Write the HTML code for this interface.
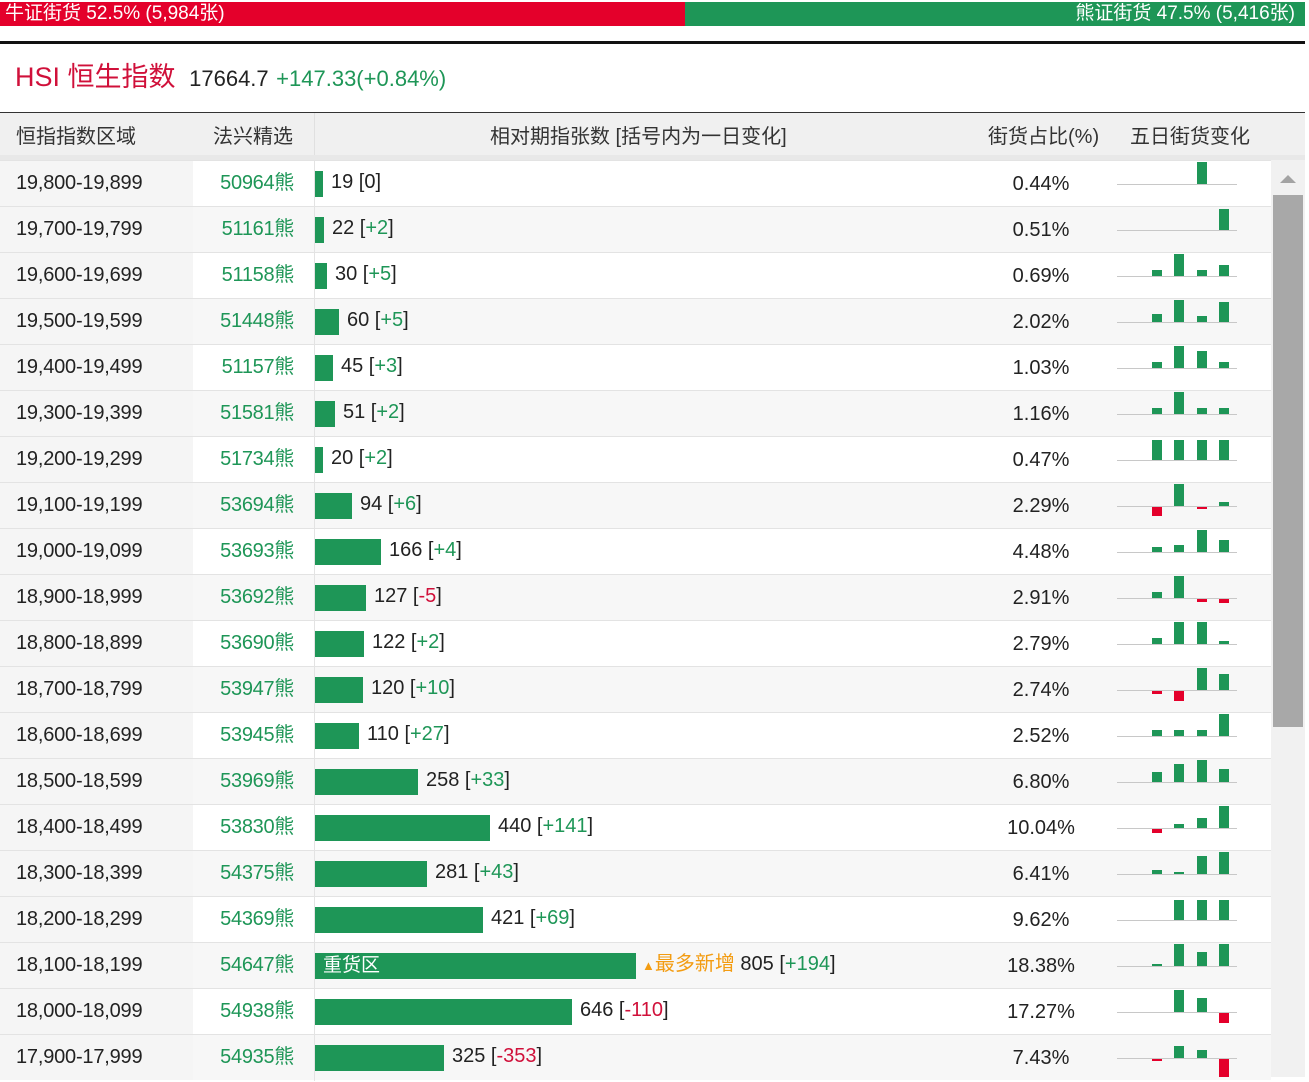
<!DOCTYPE html>
<html><head><meta charset="utf-8"><style>
*{margin:0;padding:0;box-sizing:border-box}
body{width:1309px;height:1077px;overflow:hidden;background:#fff;font-family:"Liberation Sans","Noto Sans CJK SC",sans-serif;color:#222;position:relative}
.a{position:absolute}
.r{position:absolute;left:0;width:1271px;height:46px;border-top:1px solid #e3e3e3;font-size:20px}
.r.o{background:#fff}.r.e{background:#f7f7f7}
.c1{position:absolute;left:0;top:0;width:193px;height:45px;background:#f5f5f5;padding-left:16px;line-height:45px;letter-spacing:-0.2px}
.c2{position:absolute;left:193px;top:0;width:101px;text-align:right;line-height:45px;color:#1e9657;letter-spacing:-0.3px}
.bl{position:absolute;left:314px;top:0;width:1px;height:46px;background:#e3e3e3}
.bar{position:absolute;left:315px;top:10px;height:26px;background:#1e9657}
.t{position:absolute;top:0;line-height:43px;white-space:nowrap}
.g{color:#1e9657}.d{color:#d0103a}
.p{position:absolute;left:966px;width:150px;top:0;line-height:47px;text-align:center}
.ln{position:absolute;left:1117px;top:23px;width:120px;height:1px;background:#c8c8c8}
.u,.n{position:absolute;width:10px}
.u{background:#1e9657}.n{background:#e4002b}
</style></head><body>
<div class="a" style="left:0;top:2px;width:685px;height:24px;background:#e4002b;color:#fff;font-size:19px;line-height:24px;padding-left:5px">牛证街货 52.5% (5,984张)</div>
<div class="a" style="left:685px;top:2px;width:620px;height:24px;background:#1e9657;color:#fff;font-size:19px;line-height:24px;text-align:right;padding-right:10px">熊证街货 47.5% (5,416张)</div>
<div class="a" style="left:0;top:41px;width:1305px;height:3px;background:#111"></div>
<div class="a" style="left:15px;top:59px;font-size:27px;color:#d0103a;line-height:36px">HSI 恒生指数 <span style="font-size:22px;color:#222">&nbsp;17664.7</span> <span style="font-size:22px" class="g">+147.33(+0.84%)</span></div>
<div class="a" style="left:0;top:112px;width:1305px;height:1px;background:#333"></div>
<div class="a" style="left:0;top:113px;width:1305px;height:47px;background:#f0f0f0;border-bottom:5px solid #e8e8e8;font-size:20px;color:#333">
<span class="a" style="left:16px;top:7px">恒指指数区域</span>
<span class="a" style="left:213px;top:7px">法兴精选</span>
<span class="a" style="left:314px;top:0;width:1px;height:42px;background:#e0e0e0"></span>
<span class="a" style="left:490px;top:7px">相对期指张数 [括号内为一日变化]</span>
<span class="a" style="left:988px;top:7px">街货占比(%)</span>
<span class="a" style="left:1130px;top:7px">五日街货变化</span>
</div>
<div class="a" style="left:1271px;top:160px;width:34px;height:917px;background:#f1f1f1"></div>
<div class="a" style="left:1280px;top:175px;width:0;height:0;border-left:8px solid transparent;border-right:8px solid transparent;border-bottom:8px solid #a3a3a3"></div>
<div class="a" style="left:1273px;top:195px;width:30px;height:532px;background:#a8a8a8"></div>

<div class="r o" style="top:160px"><div class="c1">19,800-19,899</div><div class="c2">50964熊</div><div class="bl"></div><div class="bar" style="width:8px"></div><div class="t" style="left:331px">19 [0]</div><div class="p">0.44%</div><div class="ln"></div><div class="u" style="left:1197px;top:1px;height:22px"></div></div>
<div class="r e" style="top:206px"><div class="c1">19,700-19,799</div><div class="c2">51161熊</div><div class="bl"></div><div class="bar" style="width:9px"></div><div class="t" style="left:332px">22 [<span class="g">+2</span>]</div><div class="p">0.51%</div><div class="ln"></div><div class="u" style="left:1219px;top:2px;height:21px"></div></div>
<div class="r o" style="top:252px"><div class="c1">19,600-19,699</div><div class="c2">51158熊</div><div class="bl"></div><div class="bar" style="width:12px"></div><div class="t" style="left:335px">30 [<span class="g">+5</span>]</div><div class="p">0.69%</div><div class="ln"></div><div class="u" style="left:1152px;top:17px;height:6px"></div><div class="u" style="left:1174px;top:1px;height:22px"></div><div class="u" style="left:1197px;top:17px;height:6px"></div><div class="u" style="left:1219px;top:12px;height:11px"></div></div>
<div class="r e" style="top:298px"><div class="c1">19,500-19,599</div><div class="c2">51448熊</div><div class="bl"></div><div class="bar" style="width:24px"></div><div class="t" style="left:347px">60 [<span class="g">+5</span>]</div><div class="p">2.02%</div><div class="ln"></div><div class="u" style="left:1152px;top:15px;height:8px"></div><div class="u" style="left:1174px;top:1px;height:22px"></div><div class="u" style="left:1197px;top:17px;height:6px"></div><div class="u" style="left:1219px;top:3px;height:20px"></div></div>
<div class="r o" style="top:344px"><div class="c1">19,400-19,499</div><div class="c2">51157熊</div><div class="bl"></div><div class="bar" style="width:18px"></div><div class="t" style="left:341px">45 [<span class="g">+3</span>]</div><div class="p">1.03%</div><div class="ln"></div><div class="u" style="left:1152px;top:17px;height:6px"></div><div class="u" style="left:1174px;top:1px;height:22px"></div><div class="u" style="left:1197px;top:6px;height:17px"></div><div class="u" style="left:1219px;top:17px;height:6px"></div></div>
<div class="r e" style="top:390px"><div class="c1">19,300-19,399</div><div class="c2">51581熊</div><div class="bl"></div><div class="bar" style="width:20px"></div><div class="t" style="left:343px">51 [<span class="g">+2</span>]</div><div class="p">1.16%</div><div class="ln"></div><div class="u" style="left:1152px;top:17px;height:6px"></div><div class="u" style="left:1174px;top:1px;height:22px"></div><div class="u" style="left:1197px;top:17px;height:6px"></div><div class="u" style="left:1219px;top:17px;height:6px"></div></div>
<div class="r o" style="top:436px"><div class="c1">19,200-19,299</div><div class="c2">51734熊</div><div class="bl"></div><div class="bar" style="width:8px"></div><div class="t" style="left:331px">20 [<span class="g">+2</span>]</div><div class="p">0.47%</div><div class="ln"></div><div class="u" style="left:1152px;top:3px;height:20px"></div><div class="u" style="left:1174px;top:3px;height:20px"></div><div class="u" style="left:1197px;top:3px;height:20px"></div><div class="u" style="left:1219px;top:3px;height:20px"></div></div>
<div class="r e" style="top:482px"><div class="c1">19,100-19,199</div><div class="c2">53694熊</div><div class="bl"></div><div class="bar" style="width:37px"></div><div class="t" style="left:360px">94 [<span class="g">+6</span>]</div><div class="p">2.29%</div><div class="ln"></div><div class="n" style="left:1152px;top:24px;height:9px"></div><div class="u" style="left:1174px;top:1px;height:22px"></div><div class="n" style="left:1197px;top:24px;height:2px"></div><div class="u" style="left:1219px;top:19px;height:4px"></div></div>
<div class="r o" style="top:528px"><div class="c1">19,000-19,099</div><div class="c2">53693熊</div><div class="bl"></div><div class="bar" style="width:66px"></div><div class="t" style="left:389px">166 [<span class="g">+4</span>]</div><div class="p">4.48%</div><div class="ln"></div><div class="u" style="left:1152px;top:18px;height:5px"></div><div class="u" style="left:1174px;top:16px;height:7px"></div><div class="u" style="left:1197px;top:1px;height:22px"></div><div class="u" style="left:1219px;top:11px;height:12px"></div></div>
<div class="r e" style="top:574px"><div class="c1">18,900-18,999</div><div class="c2">53692熊</div><div class="bl"></div><div class="bar" style="width:51px"></div><div class="t" style="left:374px">127 [<span class="d">-5</span>]</div><div class="p">2.91%</div><div class="ln"></div><div class="u" style="left:1152px;top:17px;height:6px"></div><div class="u" style="left:1174px;top:1px;height:22px"></div><div class="n" style="left:1197px;top:24px;height:3px"></div><div class="n" style="left:1219px;top:24px;height:4px"></div></div>
<div class="r o" style="top:620px"><div class="c1">18,800-18,899</div><div class="c2">53690熊</div><div class="bl"></div><div class="bar" style="width:49px"></div><div class="t" style="left:372px">122 [<span class="g">+2</span>]</div><div class="p">2.79%</div><div class="ln"></div><div class="u" style="left:1152px;top:17px;height:6px"></div><div class="u" style="left:1174px;top:1px;height:22px"></div><div class="u" style="left:1197px;top:1px;height:22px"></div><div class="u" style="left:1219px;top:20px;height:3px"></div></div>
<div class="r e" style="top:666px"><div class="c1">18,700-18,799</div><div class="c2">53947熊</div><div class="bl"></div><div class="bar" style="width:48px"></div><div class="t" style="left:371px">120 [<span class="g">+10</span>]</div><div class="p">2.74%</div><div class="ln"></div><div class="n" style="left:1152px;top:24px;height:3px"></div><div class="n" style="left:1174px;top:24px;height:10px"></div><div class="u" style="left:1197px;top:1px;height:22px"></div><div class="u" style="left:1219px;top:7px;height:16px"></div></div>
<div class="r o" style="top:712px"><div class="c1">18,600-18,699</div><div class="c2">53945熊</div><div class="bl"></div><div class="bar" style="width:44px"></div><div class="t" style="left:367px">110 [<span class="g">+27</span>]</div><div class="p">2.52%</div><div class="ln"></div><div class="u" style="left:1152px;top:17px;height:6px"></div><div class="u" style="left:1174px;top:17px;height:6px"></div><div class="u" style="left:1197px;top:17px;height:6px"></div><div class="u" style="left:1219px;top:1px;height:22px"></div></div>
<div class="r e" style="top:758px"><div class="c1">18,500-18,599</div><div class="c2">53969熊</div><div class="bl"></div><div class="bar" style="width:103px"></div><div class="t" style="left:426px">258 [<span class="g">+33</span>]</div><div class="p">6.80%</div><div class="ln"></div><div class="u" style="left:1152px;top:13px;height:10px"></div><div class="u" style="left:1174px;top:5px;height:18px"></div><div class="u" style="left:1197px;top:1px;height:22px"></div><div class="u" style="left:1219px;top:10px;height:13px"></div></div>
<div class="r o" style="top:804px"><div class="c1">18,400-18,499</div><div class="c2">53830熊</div><div class="bl"></div><div class="bar" style="width:175px"></div><div class="t" style="left:498px">440 [<span class="g">+141</span>]</div><div class="p">10.04%</div><div class="ln"></div><div class="n" style="left:1152px;top:24px;height:4px"></div><div class="u" style="left:1174px;top:19px;height:4px"></div><div class="u" style="left:1197px;top:13px;height:10px"></div><div class="u" style="left:1219px;top:1px;height:22px"></div></div>
<div class="r e" style="top:850px"><div class="c1">18,300-18,399</div><div class="c2">54375熊</div><div class="bl"></div><div class="bar" style="width:112px"></div><div class="t" style="left:435px">281 [<span class="g">+43</span>]</div><div class="p">6.41%</div><div class="ln"></div><div class="u" style="left:1152px;top:19px;height:4px"></div><div class="u" style="left:1174px;top:21px;height:2px"></div><div class="u" style="left:1197px;top:5px;height:18px"></div><div class="u" style="left:1219px;top:1px;height:22px"></div></div>
<div class="r o" style="top:896px"><div class="c1">18,200-18,299</div><div class="c2">54369熊</div><div class="bl"></div><div class="bar" style="width:168px"></div><div class="t" style="left:491px">421 [<span class="g">+69</span>]</div><div class="p">9.62%</div><div class="ln"></div><div class="u" style="left:1174px;top:3px;height:20px"></div><div class="u" style="left:1197px;top:3px;height:20px"></div><div class="u" style="left:1219px;top:3px;height:20px"></div></div>
<div class="r e" style="top:942px"><div class="c1">18,100-18,199</div><div class="c2">54647熊</div><div class="bl"></div><div class="bar" style="width:321px;color:#fff;line-height:26px;padding-left:8px;font-size:19px">重货区</div><div class="t" style="left:642px"><span style="color:#f39c12"><span style="font-size:13px">▲</span>最多新增</span> 805 [<span class="g">+194</span>]</div><div class="p">18.38%</div><div class="ln"></div><div class="u" style="left:1152px;top:21px;height:2px"></div><div class="u" style="left:1174px;top:1px;height:22px"></div><div class="u" style="left:1197px;top:9px;height:14px"></div><div class="u" style="left:1219px;top:1px;height:22px"></div></div>
<div class="r o" style="top:988px"><div class="c1">18,000-18,099</div><div class="c2">54938熊</div><div class="bl"></div><div class="bar" style="width:257px"></div><div class="t" style="left:580px">646 [<span class="d">-110</span>]</div><div class="p">17.27%</div><div class="ln"></div><div class="u" style="left:1174px;top:1px;height:22px"></div><div class="u" style="left:1197px;top:9px;height:14px"></div><div class="n" style="left:1219px;top:24px;height:10px"></div></div>
<div class="r e" style="top:1034px"><div class="c1">17,900-17,999</div><div class="c2">54935熊</div><div class="bl"></div><div class="bar" style="width:129px"></div><div class="t" style="left:452px">325 [<span class="d">-353</span>]</div><div class="p">7.43%</div><div class="ln"></div><div class="n" style="left:1152px;top:24px;height:2px"></div><div class="u" style="left:1174px;top:11px;height:12px"></div><div class="u" style="left:1197px;top:15px;height:8px"></div><div class="n" style="left:1219px;top:24px;height:18px"></div></div>
</body></html>
